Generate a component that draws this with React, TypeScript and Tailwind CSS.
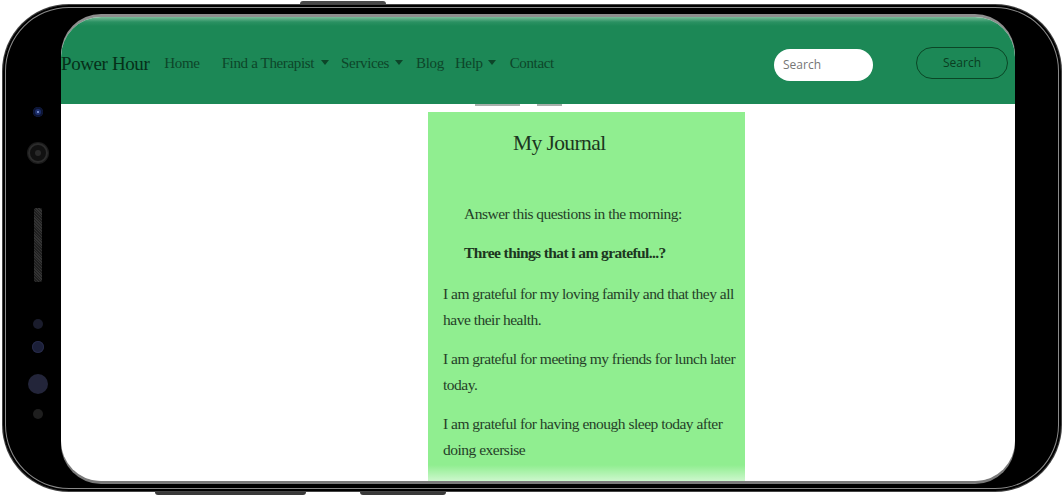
import React from "react";

function Caret() {
  return (
    <span className="inline-block w-0 h-0 border-l-[4px] border-r-[4px] border-t-[5px] border-l-transparent border-r-transparent border-t-[#0d4529]" />
  );
}

function LeftBezel() {
  return (
    <div className="w-[58px] shrink-0 flex flex-col items-center pl-[12px] pt-[102px]">
      <div className="w-[10px] h-[10px] rounded-full bg-[#1d2f6e] shadow-[inset_0_0_0_2px_#0d1534] flex items-center justify-center">
        <div className="w-[2px] h-[2px] rounded-full bg-[#8fa6e0]" />
      </div>
      <div className="mt-[26px] w-[20px] h-[20px] rounded-full bg-[#111] shadow-[inset_0_0_0_2px_#2c2c2c,0_0_0_1px_#1c1c1c] flex items-center justify-center">
        <div className="w-[6px] h-[6px] rounded-full bg-[#2a2a2a]" />
      </div>
      <div className="mt-[45px] w-[8px] h-[74px] rounded-[2px] bg-[#2b2b2b] bg-[repeating-linear-gradient(45deg,#1f1f1f_0px,#1f1f1f_1px,#333_1px,#333_2px)]" />
      <div className="mt-[37px] w-[10px] h-[10px] rounded-full bg-[#1a1c2c]" />
      <div className="mt-[12px] w-[12px] h-[12px] rounded-full bg-[#1b1f38] shadow-[inset_0_0_0_1px_#262a48]" />
      <div className="mt-[21px] w-[20px] h-[20px] rounded-full bg-[#23253a]" />
      <div className="mt-[15px] w-[10px] h-[10px] rounded-full bg-[#1e1e1e]" />
    </div>
  );
}

function NavBar() {
  return (
    <div className="h-[87px] shrink-0 flex items-center pt-[5px] bg-[linear-gradient(to_bottom,#79bd99_0px,#2a9162_5px,#1c8856_9px,#1c8856_100%)] font-['Liberation_Serif',serif]">
      <span className="text-[19px] tracking-[-0.4px] text-[#062f19] leading-none">Power Hour</span>
      <div className="flex items-center text-[15px] tracking-[-0.35px] text-[#0d4529] leading-none">
        <span className="ml-[15px]">Home</span>
        <span className="ml-[22px]">Find a Therapist</span>
        <span className="ml-[7px] mt-[-1px] flex"><Caret /></span>
        <span className="ml-[12px]">Services</span>
        <span className="ml-[6px] mt-[-1px] flex"><Caret /></span>
        <span className="ml-[13px]">Blog</span>
        <span className="ml-[11px]">Help</span>
        <span className="ml-[5px] mt-[-1px] flex"><Caret /></span>
        <span className="ml-[14px]">Contact</span>
      </div>
      <div className="ml-auto flex items-center mr-[7px] font-['Open_Sans',sans-serif]">
        <div className="mt-[4px] w-[99px] h-[32px] rounded-full bg-white flex items-center pl-[9px] text-[12px] text-[#767676]">
          Search
        </div>
        <div className="ml-[43px] w-[92px] h-[32px] rounded-full border border-[#0b4626] flex items-center justify-center text-[12px] text-[#0a3d21]">
          Search
        </div>
      </div>
    </div>
  );
}

function Journal() {
  return (
    <div className="ml-[367px] w-[317px] flex-1 bg-[#90ee90] font-['Liberation_Serif',serif] text-[#253f28] pt-[16px]">
      <div className="ml-[85px] text-[21.5px] tracking-[-0.6px] leading-[30px] text-[#1c3620]">My Journal</div>
      <div className="mt-[43px] ml-[36px] text-[15.5px] tracking-[-0.5px] leading-[26px]">
        Answer this questions in the morning:
      </div>
      <div className="mt-[13px] ml-[36px] text-[15.5px] tracking-[-0.6px] leading-[26px] font-bold text-[#1c3620]">
        Three things that i am grateful...?
      </div>
      <div className="mt-[15px] pl-[15px] text-[15.5px] tracking-[-0.5px] leading-[26px]">
        <p className="mb-[13px]">I am grateful for my loving family and that they all have their health.</p>
        <p className="mb-[13px]">I am grateful for meeting my friends for lunch later today.</p>
        <p className="mb-[13px]">I am grateful for having enough sleep today after doing exersise</p>
      </div>
    </div>
  );
}

function Screen() {
  return (
    <div className="relative flex-1 mt-[12px] mb-[10px] mr-[46px] rounded-[40px] overflow-hidden bg-white flex flex-col shadow-[0_-3px_0_#8e8e8e,0_3px_0_#7a7a7a]">
      <NavBar />
      <div className="h-[8px] shrink-0 flex">
        <div className="ml-[414px] w-[45px] h-[2px] bg-[#a7b0ab]" />
        <div className="ml-[17px] w-[25px] h-[2px] bg-[#a7b0ab]" />
      </div>
      <Journal />
      <div className="absolute left-0 right-0 bottom-0 h-[16px] bg-[linear-gradient(to_bottom,rgba(255,255,255,0),rgba(255,255,255,0.55))]" />
    </div>
  );
}

export default function App() {
  return (
    <div className="relative w-[1064px] h-[496px] bg-white overflow-hidden">
      <div className="absolute left-[300px] top-[1px] w-[86px] h-[8px] rounded-t-[3px] bg-[#4a4a4a]" />
      <div className="absolute left-[155px] top-[486px] w-[151px] h-[9px] rounded-b-[3px] bg-[#3a3a3a]" />
      <div className="absolute left-[360px] top-[486px] w-[86px] h-[9px] rounded-b-[3px] bg-[#3a3a3a]" />
      <div className="relative ml-[3px] mt-[5px] w-[1058px] h-[486px] rounded-[66px] bg-black flex shadow-[inset_0_0_0_2px_#000,inset_0_0_0_3px_#8a8a8a,0_0_0_1px_#444]">
        <LeftBezel />
        <Screen />
      </div>
    </div>
  );
}
